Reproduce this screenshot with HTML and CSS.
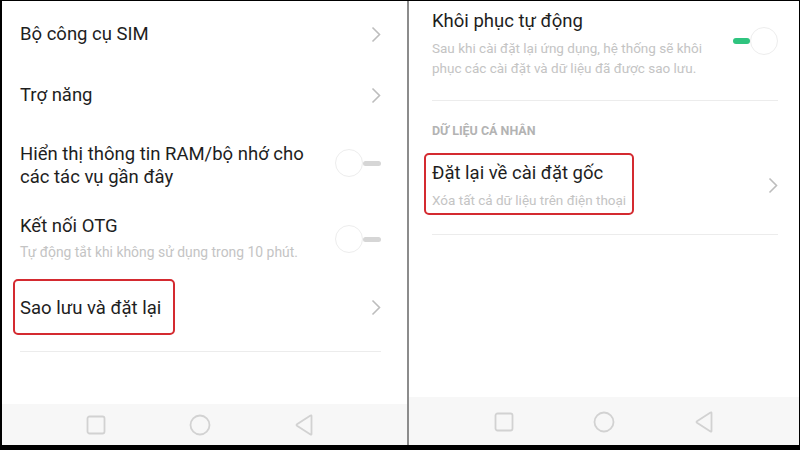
FILE: index.html
```html
<!DOCTYPE html>
<html lang="vi">
<head>
    <meta charset="UTF-8">
    <meta name="viewport" content="width=device-width, initial-scale=1.0">
    <title>Sao lưu và đặt lại</title>
    <link rel="stylesheet" href="styles.css">
</head>
<body>
    <div class="frame">
        <div class="phone phone-left">
            <div class="content">
                <div class="row row-sim">
                    <span class="title">Bộ công cụ SIM</span>
                    <svg class="chevron" viewBox="0 0 10 17"><path d="M1.5 1.5 L8.5 8.5 L1.5 15.5"/></svg>
                </div>
                <div class="row row-access">
                    <span class="title">Trợ năng</span>
                    <svg class="chevron" viewBox="0 0 10 17"><path d="M1.5 1.5 L8.5 8.5 L1.5 15.5"/></svg>
                </div>
                <div class="row row-ram">
                    <span class="title">Hiển thị thông tin RAM/bộ nhớ cho<br>các tác vụ gần đây</span>
                    <div class="toggle off"><span class="knob"></span><span class="bar"></span></div>
                </div>
                <div class="row row-otg">
                    <div class="text">
                        <div class="title">Kết nối OTG</div>
                        <div class="sub">Tự động tắt khi không sử dụng trong 10 phút.</div>
                    </div>
                    <div class="toggle off"><span class="knob"></span><span class="bar"></span></div>
                </div>
                <div class="row row-backup">
                    <div class="mark mark-left">
                        <span class="title">Sao lưu và đặt lại</span>
                    </div>
                    <svg class="chevron" viewBox="0 0 10 17"><path d="M1.5 1.5 L8.5 8.5 L1.5 15.5"/></svg>
                </div>
                <div class="divider"></div>
            </div>
            <div class="navbar">
                <svg class="nav-icon" viewBox="0 0 22 22"><rect x="2.5" y="2.5" width="17" height="17" rx="2"/></svg>
                <svg class="nav-icon" viewBox="0 0 22 22"><circle cx="11" cy="11" r="9.5"/></svg>
                <svg class="nav-icon" viewBox="0 0 22 22"><path d="M18.5 2 L18.5 20 Q18.5 21 17.5 20.4 L4 11.8 Q3 11 4 10.2 L17.5 1.6 Q18.5 1 18.5 2 Z"/></svg>
            </div>
        </div>
        <div class="split"></div>
        <div class="phone phone-right">
            <div class="content">
                <div class="row row-auto">
                    <div class="text">
                        <div class="title">Khôi phục tự động</div>
                        <div class="sub">Sau khi cài đặt lại ứng dụng, hệ thống sẽ khôi<br>phục các cài đặt và dữ liệu đã được sao lưu.</div>
                    </div>
                    <div class="toggle on"><span class="bar"></span><span class="knob"></span></div>
                </div>
                <div class="divider"></div>
                <div class="section">DỮ LIỆU CÁ NHÂN</div>
                <div class="row row-reset">
                    <div class="mark mark-right">
                        <div class="title">Đặt lại về cài đặt gốc</div>
                        <div class="sub">Xóa tất cả dữ liệu trên điện thoại</div>
                    </div>
                    <svg class="chevron" viewBox="0 0 10 17"><path d="M1.5 1.5 L8.5 8.5 L1.5 15.5"/></svg>
                </div>
                <div class="divider"></div>
            </div>
            <div class="navbar">
                <svg class="nav-icon" viewBox="0 0 22 22"><rect x="2.5" y="2.5" width="17" height="17" rx="2"/></svg>
                <svg class="nav-icon" viewBox="0 0 22 22"><circle cx="11" cy="11" r="9.5"/></svg>
                <svg class="nav-icon" viewBox="0 0 22 22"><path d="M18.5 2 L18.5 20 Q18.5 21 17.5 20.4 L4 11.8 Q3 11 4 10.2 L17.5 1.6 Q18.5 1 18.5 2 Z"/></svg>
            </div>
        </div>
    </div>
</body>
</html>
```

FILE: styles.css
```css
* {
    box-sizing: border-box;
}

body {
    margin: 0;
    background: #000;
    font-family: Roboto, "Noto Sans", Arial, sans-serif;
}

.frame {
    display: flex;
    width: 800px;
    height: 450px;
    border-style: solid;
    border-color: #000;
    border-width: 1px 1px 5px 2px;
    background: #fff;
}

.phone {
    display: flex;
    flex-direction: column;
    background: #fff;
}

.phone-left {
    width: 405px;
}

.phone-right {
    flex: 1;
}

.split {
    width: 2px;
    background: #8c8c8c;
}

.content {
    flex: 1;
}

.phone-left .content {
    padding: 0 26px 0 18px;
}

.phone-right .content {
    padding: 0 21px 0 23px;
}

.row {
    display: flex;
    align-items: center;
    justify-content: space-between;
}

.title {
    font-size: 18.5px;
    line-height: 24px;
    color: #1e1e1e;
}

.sub {
    font-size: 13.5px;
    line-height: 20px;
    color: #c4c4c4;
}

.chevron {
    width: 10px;
    height: 17px;
    fill: none;
    stroke: #bdbdbd;
    stroke-width: 1.6;
}

/* left screen rows */
.row-sim {
    height: 66px;
}

.row-access {
    height: 56px;
}

.row-ram {
    height: 85px;
}

.row-ram .title {
    line-height: 23px;
}

.row-otg {
    height: 60px;
}

.row-otg .sub {
    margin-top: 4px;
    font-size: 13.9px;
}

.row-backup {
    padding-top: 11px;
    padding-bottom: 16px;
}

.mark {
    border: 2px solid #d42a30;
    border-radius: 5px;
}

.mark-left {
    width: 162px;
    height: 56px;
    margin-left: -7px;
    padding: 15px 0 0 5px;
}

.mark-right {
    width: 210px;
    margin-left: -8px;
    padding: 6px 0 3px 6px;
}

.mark-right .sub {
    margin-top: 5px;
}

.divider {
    height: 1px;
    background: #ececec;
}

/* toggles */
.toggle {
    display: flex;
    align-items: center;
}

.knob {
    width: 28px;
    height: 28px;
    border-radius: 50%;
    border: 1px solid #ededed;
    background: #fff;
}

.toggle.off .bar {
    width: 18px;
    height: 5px;
    border-radius: 3px;
    background: #d6d6d6;
}

.toggle.on .bar {
    width: 17px;
    height: 6px;
    border-radius: 3px;
    background: #2fc47f;
}

.row-ram .toggle {
    margin-top: -5px;
}

.row-otg .toggle {
    margin-bottom: -2px;
}

/* right screen rows */
.row-auto {
    padding-top: 8px;
    padding-bottom: 22px;
}

.row-auto .sub {
    margin-top: 5px;
}

.row-auto .toggle {
    margin-bottom: 6px;
}

.section {
    margin-top: 20px;
    font-size: 12.5px;
    line-height: 20px;
    font-weight: bold;
    color: #b3b3b3;
}

.row-reset {
    margin-top: 12px;
    margin-bottom: 19px;
}

.row-reset .chevron {
    margin-top: 2px;
}

/* navigation bar */
.navbar {
    display: flex;
    align-items: center;
    justify-content: center;
    background: #f7f7f7;
}

.phone-left .navbar {
    height: 41px;
    gap: 82px;
    padding-right: 10px;
}

.phone-right .navbar {
    height: 48px;
    gap: 78px;
    padding-top: 2px;
}

.nav-icon {
    width: 22px;
    height: 22px;
    fill: none;
    stroke: #d2d2d2;
    stroke-width: 1.8;
}
```
